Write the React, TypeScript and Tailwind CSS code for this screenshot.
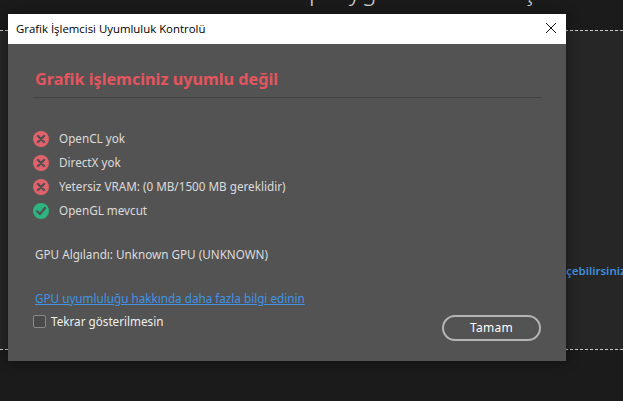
import React from "react";

const font = "font-['Noto_Sans','Open_Sans',sans-serif]";

function Cross() {
  return (
    <svg width="16" height="16" viewBox="0 0 16 16" className="shrink-0">
      <circle cx="8" cy="8" r="8" fill="#e0636b" />
      <path d="M5 5 L11 11 M11 5 L5 11" stroke="#505050" strokeWidth="2.4" strokeLinecap="round" />
    </svg>
  );
}

function Check() {
  return (
    <svg width="16" height="16" viewBox="0 0 16 16" className="shrink-0">
      <circle cx="8" cy="8" r="8" fill="#2fb37f" />
      <path d="M4.2 8.2 L7 11 L12 5" fill="none" stroke="#505050" strokeWidth="2.2" strokeLinecap="round" strokeLinejoin="round" />
    </svg>
  );
}

function Row({ ok, text }: { ok?: boolean; text: string }) {
  return (
    <div className="flex h-6 items-center gap-[10px]">
      {ok ? <Check /> : <Cross />}
      <span>{text}</span>
    </div>
  );
}

export default function App() {
  return (
    <div className={`${font} relative h-[401px] w-[623px] overflow-hidden bg-[#1b1b1b]`}>
      <div className="absolute left-[309px] top-[-23px] text-[24px] font-light leading-7 text-[#d8d8d8]">p</div>
      <div className="absolute left-[349px] top-[-23px] text-[24px] font-light leading-7 text-[#d8d8d8]">y</div>
      <div className="absolute left-[362px] top-[-23px] text-[24px] font-light leading-7 text-[#d8d8d8]">g</div>
      <div className="absolute left-[524px] top-[-23px] text-[24px] font-light leading-7 text-[#d8d8d8]">ş</div>
      <div className="absolute left-0 right-0 top-[30px] h-[320px] border-y border-dashed border-[#c8c8c8] bg-[#262626]" />
      <div className="absolute left-[566px] top-[263px] text-[11.5px] font-semibold leading-4 text-[#3f8fdc] whitespace-nowrap">
        çebilirsiniz
      </div>
      <div className="absolute left-[8px] top-[14px] flex h-[347px] w-[558px] flex-col shadow-[0_0_12px_rgba(0,0,0,0.45)]">
        <div className="flex h-[30px] shrink-0 items-center justify-between bg-white pl-2 pr-[9px]">
          <span className="font-['Open_Sans',sans-serif] text-[11.4px] text-black">Grafik İşlemcisi Uyumluluk Kontrolü</span>
          <svg width="12" height="12" viewBox="0 0 12 12" className="-translate-y-px">
            <path d="M1 1 L11 11 M11 1 L1 11" stroke="#111" strokeWidth="1" />
          </svg>
        </div>
        <div className="flex flex-1 flex-col bg-[#535353] pl-[25px] pr-[25px] text-[11.7px] text-[#dcdcdc]">
          <div className="mt-[23px] border-b border-[#414141] pb-[6px] pl-[2px] text-[16.2px] font-bold leading-[24px] text-[#e4555f]">
            Grafik işlemciniz uyumlu değil
          </div>
          <div className="mt-[29px] flex flex-col">
            <Row text="OpenCL yok" />
            <Row text="DirectX yok" />
            <Row text="Yetersiz VRAM: (0 MB/1500 MB gereklidir)" />
            <Row ok text="OpenGL mevcut" />
          </div>
          <div className="mt-[21px] pl-[2px] leading-[20px]">GPU Algılandı: Unknown GPU (UNKNOWN)</div>
          <a className="mt-[24px] pl-[2px] leading-[20px] text-[#3f94e4] underline">
            GPU uyumluluğu hakkında daha fazla bilgi edinin
          </a>
          <div className="flex items-start justify-between">
            <label className="mt-[5px] flex items-center gap-[5px] text-[#f0f0f0]">
              <span className="h-[13px] w-[13px] rounded-[2px] border border-[#8a8a8a] bg-[#4a4a4a]" />
              Tekrar gösterilmesin
            </label>
            <button className="mt-[7px] h-[26px] w-[99px] rounded-full border-2 border-[#b4b4b4] text-[12px] tracking-[0.3px] text-white">
              Tamam
            </button>
          </div>
        </div>
      </div>
    </div>
  );
}
